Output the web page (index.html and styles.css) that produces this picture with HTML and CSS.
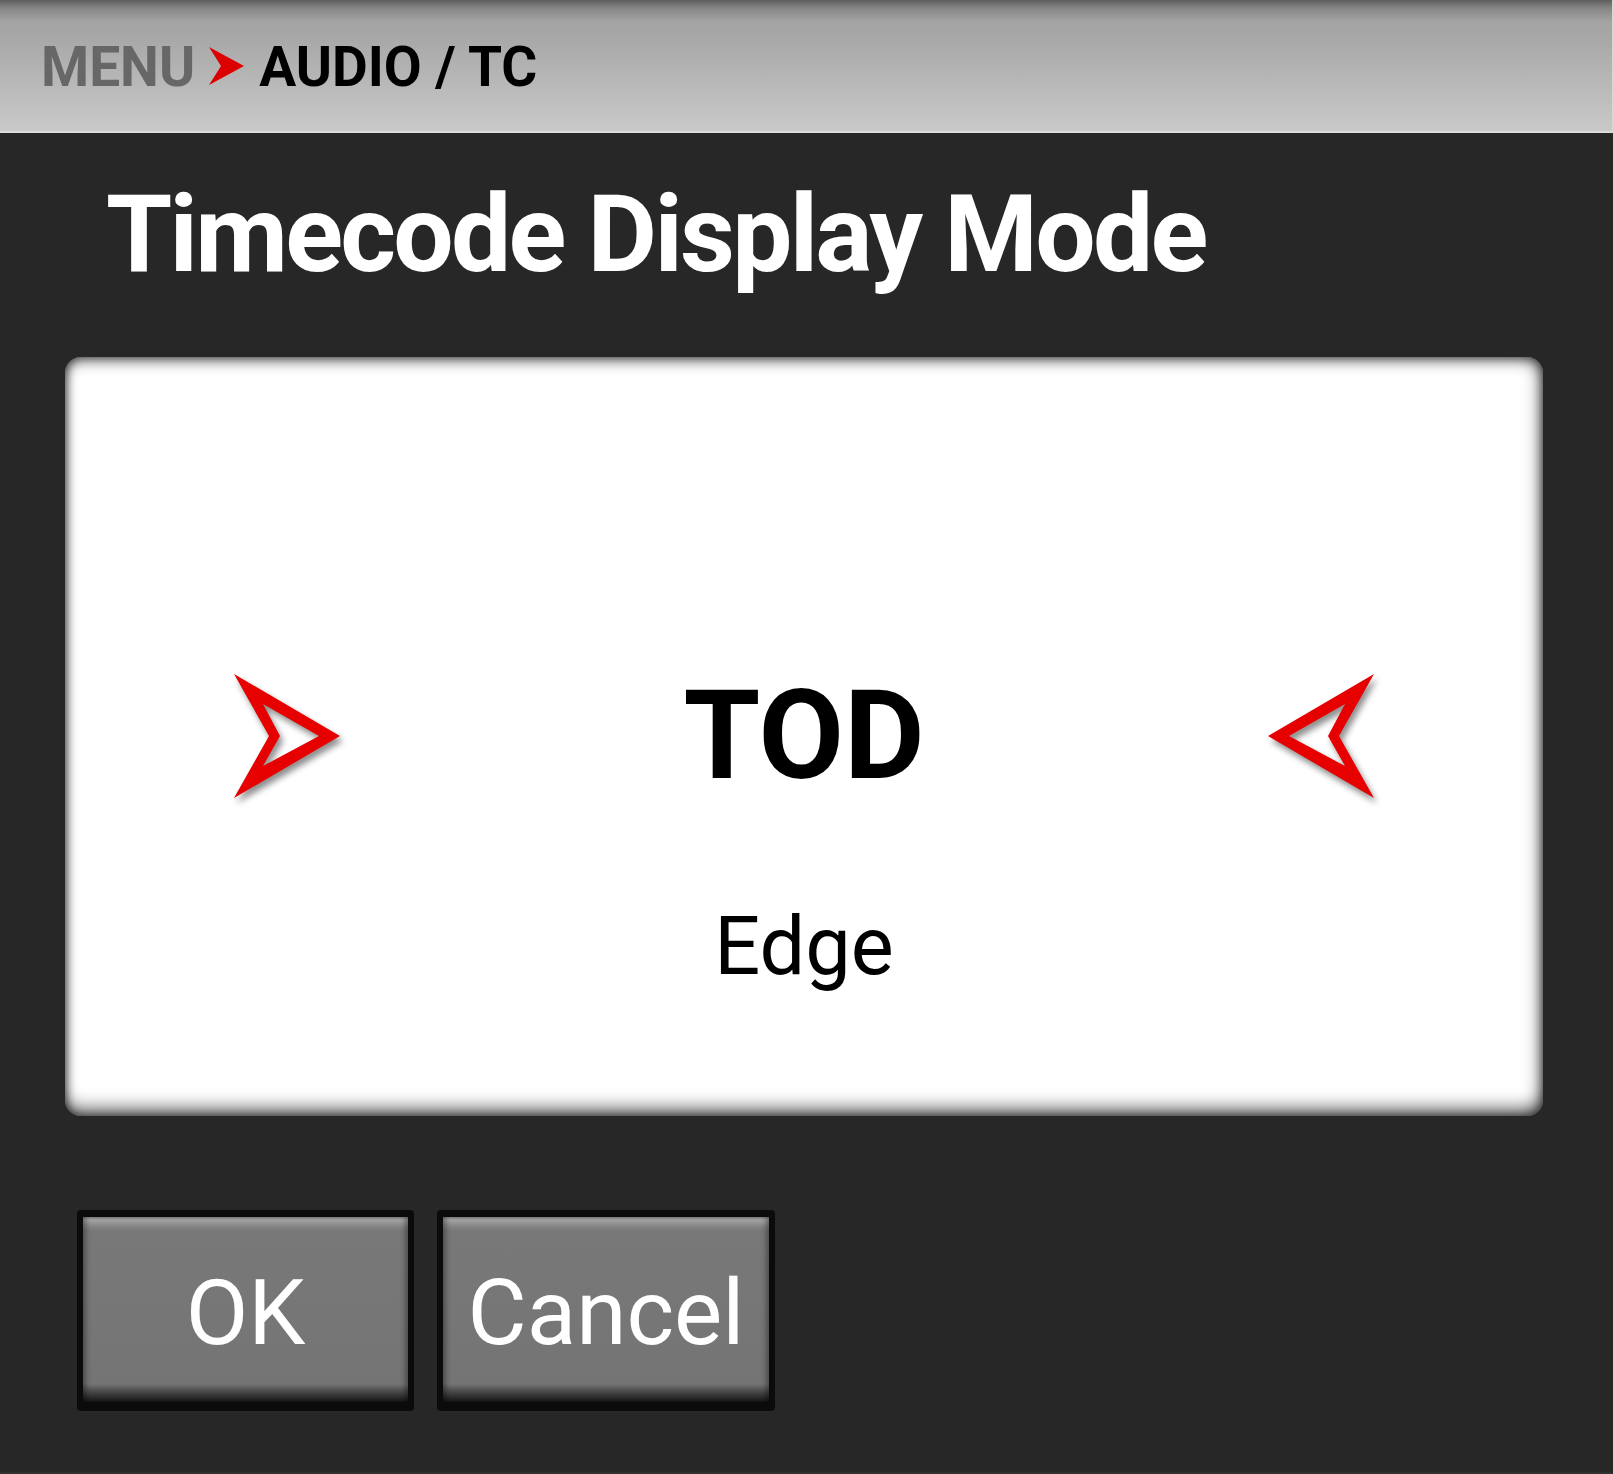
FILE: index.html
```html
<!DOCTYPE html>
<html lang="en">
<head>
<meta charset="utf-8">
<title>Timecode Display Mode</title>
<link rel="stylesheet" href="styles.css">
</head>
<body>
<div class="screen">
  <header class="topbar">
    <span class="crumb-root">MENU</span>
    <svg class="crumb-sep" viewBox="0 0 35 38" width="35" height="38" aria-hidden="true">
      <polygon points="0,0 35,19 0,38 12,19" fill="#dd0000"/>
    </svg>
    <span class="crumb-current">AUDIO / TC</span>
  </header>

  <h1 class="title">Timecode Display Mode</h1>

  <section class="picker">
    <div class="picker-row">
      <svg class="nav-arrow" viewBox="0 0 106 124" width="106" height="124" aria-hidden="true">
        <path fill-rule="evenodd" fill="#e60000" d="M0,0 L106,62 L0,124 L35,62 Z M29,30 L46,62 L29,92 L85,62 Z"/>
      </svg>
      <div class="picker-value">TOD</div>
      <svg class="nav-arrow" viewBox="0 0 106 124" width="106" height="124" aria-hidden="true">
        <path fill-rule="evenodd" fill="#e60000" d="M106,0 L0,62 L106,124 L71,62 Z M77,30 L60,62 L77,92 L21,62 Z"/>
      </svg>
    </div>
    <div class="picker-sub">Edge</div>
  </section>

  <div class="actions">
    <button class="btn"><span class="btn-face">OK</span></button>
    <button class="btn"><span class="btn-face">Cancel</span></button>
  </div>
</div>
</body>
</html>
```
FILE: styles.css
```css
html, body {
  margin: 0;
  padding: 0;
  background: #272727;
}

body {
  font-family: Roboto, "Liberation Sans", Arial, sans-serif;
}

.screen {
  width: 1613px;
  height: 1474px;
  background: #272727;
  overflow: hidden;
  box-sizing: border-box;
  border-bottom: 2px solid #303030;
}

.topbar {
  height: 133px;
  box-sizing: border-box;
  padding: 3px 0 0 41px;
  display: flex;
  align-items: center;
  gap: 14px;
  background:
    linear-gradient(to bottom, rgba(0,0,0,0.42) 0px, rgba(0,0,0,0.18) 8px, rgba(0,0,0,0) 22px),
    linear-gradient(to bottom, #a2a2a2 0%, #a6a6a6 25%, #c9c9c9 100%);
  border-bottom: 2px solid #dcdcdc;
  border-right: 1px solid #d8d8d8;
  font-weight: 700;
  font-size: 55px;
  line-height: 1;
}

.crumb-root {
  color: #676767;
}

.crumb-sep {
  display: block;
  margin-top: -2px;
}

.crumb-current {
  color: #000;
  padding-left: 1px;
}

.title {
  margin: 48px 0 0 0;
  padding-left: 106px;
  color: #fff;
  font-size: 107px;
  font-weight: 700;
  letter-spacing: -2.7px;
  line-height: 107px;
  height: 107px;
}

.picker {
  margin: 69px 0 0 65px;
  width: 1478px;
  height: 759px;
  box-sizing: border-box;
  padding-top: 317px;
  background: #fff;
  border-radius: 16px;
  box-shadow:
    inset 0 0 10px rgba(0,0,0,0.55),
    inset 0 -14px 16px -4px rgba(0,0,0,0.45),
    inset -10px 0 16px -4px rgba(0,0,0,0.32),
    inset 6px 0 12px -4px rgba(0,0,0,0.25),
    inset 0 10px 14px -4px rgba(0,0,0,0.32);
  display: flex;
  flex-direction: column;
  align-items: center;
}

.picker-row {
  display: flex;
  align-items: center;
  justify-content: center;
  gap: 343px;
  height: 124px;
}

.nav-arrow {
  display: block;
  filter: drop-shadow(3px 5px 3px rgba(0,0,0,0.45));
}

.picker-value {
  font-size: 124px;
  line-height: 124px;
  font-weight: 700;
  color: #000;
}

.picker-sub {
  margin-top: 108px;
  font-size: 81px;
  line-height: 81px;
  font-weight: 400;
  color: #000;
}

.actions {
  display: flex;
  gap: 23px;
  margin: 94px 0 0 77px;
}

.btn {
  display: block;
  width: 337px;
  height: 201px;
  box-sizing: border-box;
  padding: 7px 6px 9px 6px;
  margin: 0;
  border: none;
  border-radius: 4px;
  background: #0b0b0b;
  font-family: inherit;
  cursor: pointer;
}

.btn + .btn {
  width: 338px;
}

.btn-face {
  display: flex;
  align-items: center;
  justify-content: center;
  width: 100%;
  height: 100%;
  box-sizing: border-box;
  padding-top: 8px;
  color: #fff;
  font-size: 91px;
  font-weight: 400;
  line-height: 1;
  background: linear-gradient(to bottom,
    #8a8a8a 0px, #a3a3a3 3px, #868686 9px, #787878 14px,
    #767676 60%, #747474 calc(100% - 18px),
    #3c3c3c calc(100% - 8px), #161616 100%);
  box-shadow:
    inset 5px 0 5px -2px rgba(0,0,0,0.35),
    inset -5px 0 5px -2px rgba(0,0,0,0.35);
}
```
